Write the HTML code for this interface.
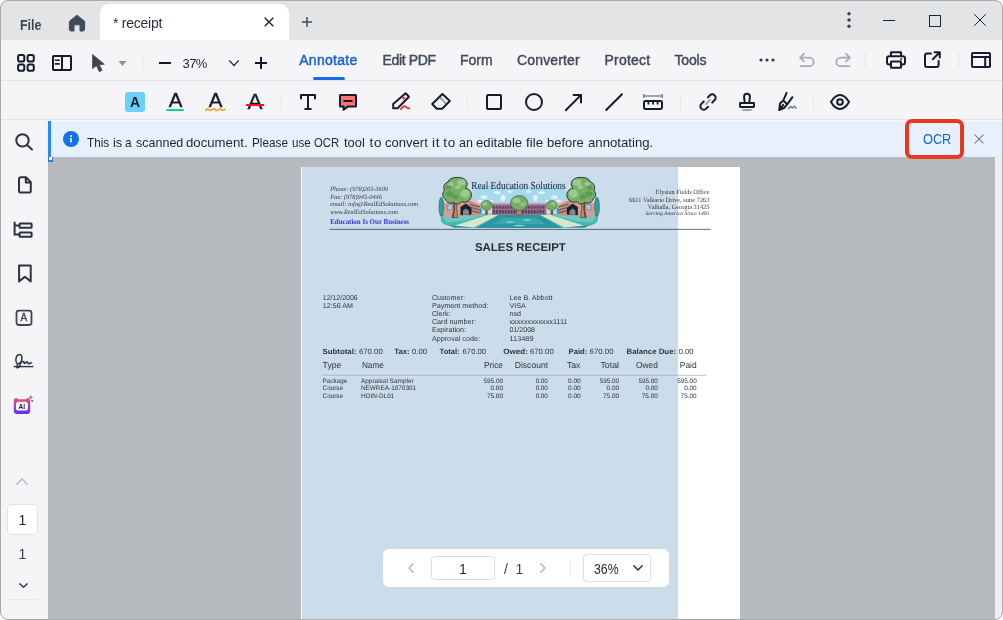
<!DOCTYPE html>
<html><head><meta charset="utf-8"><title>receipt</title>
<style>
*{box-sizing:border-box;margin:0;padding:0}
html,body{width:1003px;height:620px;overflow:hidden;background:#fff}
body{opacity:0.999;font-family:"Liberation Sans",sans-serif;color:#1a2233;position:relative}
div{position:absolute}
.t{white-space:nowrap;line-height:1}
svg{position:absolute;overflow:visible}
.ic{fill:none;stroke:#141c2e;stroke-width:2;stroke-linecap:round;stroke-linejoin:round}
#ntext span{position:absolute;top:0;white-space:pre;transform-origin:0 0}
.sep{width:1px;background:#e6e7ea}
.menu{font-size:14px;font-weight:normal;-webkit-text-stroke:0.45px;color:#434b5b;top:53px}
#frame{left:0;top:0;width:1003px;height:620px;border:1px solid #a9aaac;border-radius:8px;box-shadow:0 0 0 12px #fff;z-index:50}
</style></head><body>
<!-- backgrounds -->
<div id="title" style="left:0;top:0;width:1003px;height:40px;background:#e3e4e6"></div>
<div id="tb1" style="left:0;top:40px;width:1003px;height:40px;background:#f5f5f7"></div>
<div id="tbline" style="left:0;top:80px;width:1003px;height:1px;background:#e4e5e8"></div>
<div id="tb2" style="left:0;top:81px;width:1003px;height:38px;background:#f5f5f7"></div>
<div id="tbline2" style="left:0;top:119px;width:1003px;height:1px;background:#e5e5e7"></div>
<div id="tbgap" style="left:0;top:120px;width:1003px;height:1px;background:#f7f7f9"></div>
<div id="side" style="left:0;top:120px;width:48px;height:500px;background:#f5f5f7"></div>
<div id="doc" style="left:48px;top:121px;width:947px;height:499px;background:#b6b9be"></div>
<div id="rstrip" style="left:995px;top:157px;width:8px;height:463px;background:#eeeef0"></div>

<!-- title bar content -->
<div class="t" id="file" style="left:19.6px;top:18px;font-size:14px;font-weight:bold;transform:scaleX(0.89);transform-origin:0 0;color:#3d4555">File</div>
<svg id="home" style="left:68px;top:14px" width="18" height="18" viewBox="0 0 18 18"><path d="M9 1.2 L16.6 7.3 V15.3 Q16.6 17 14.9 17 H12 V10.8 H6 V17 H3.1 Q1.4 17 1.4 15.3 V7.3 Z" fill="#414a5c" stroke="#414a5c" stroke-width="1" stroke-linejoin="round"/></svg>
<div id="tab" style="left:100px;top:4px;width:189px;height:36px;background:#fff;border-radius:9px 9px 0 0"></div>
<div class="t" id="tabname" style="left:113px;top:16px;font-size:14px;letter-spacing:-0.25px;color:#2a3140">* receipt</div>
<svg id="tabx" style="left:264px;top:17px" width="10" height="10" viewBox="0 0 10 10"><path d="M0.7 0.7 L9.3 9.3 M9.3 0.7 L0.7 9.3" stroke="#1d2433" stroke-width="1.4" fill="none"/></svg>
<svg id="tabplus" style="left:302px;top:17px" width="10" height="10" viewBox="0 0 10 10"><path d="M5 0 V10 M0 5 H10" stroke="#444b5a" stroke-width="1.5" fill="none"/></svg>
<svg id="vdots" style="left:846px;top:12px" width="6" height="16" viewBox="0 0 6 16"><circle cx="3" cy="1.8" r="1.7" fill="#3c4352"/><circle cx="3" cy="8" r="1.7" fill="#3c4352"/><circle cx="3" cy="14.2" r="1.7" fill="#3c4352"/></svg>
<div id="wmin" style="left:883px;top:20px;width:12px;height:1px;background:#1d2433"></div>
<div id="wmax" style="left:929px;top:15px;width:12px;height:12px;border:1px solid #1d2433"></div>
<svg id="wclose" style="left:974px;top:14px" width="12" height="12" viewBox="0 0 12 12"><path d="M0.3 0.3 L11.7 11.7 M11.7 0.3 L0.3 11.7" stroke="#1d2433" stroke-width="1" fill="none"/></svg>


<!-- toolbar 1 -->
<svg id="i-grid" style="left:17px;top:54px" width="18" height="18" viewBox="0 0 18 18"><g class="ic" stroke-width="1.8"><rect x="1.1" y="1.1" width="6.2" height="6.4" rx="1.8"/><rect x="10.6" y="1.1" width="6.2" height="6.4" rx="1.8"/><rect x="1.1" y="10.5" width="6.2" height="6.2" rx="1.8"/><rect x="10.6" y="10.5" width="6.2" height="6.2" rx="1.8"/></g></svg>
<svg id="i-panel" style="left:52px;top:55px" width="20" height="16" viewBox="0 0 20 16"><g class="ic" stroke-linecap="butt"><rect x="1" y="1" width="18" height="14" rx="0.8"/><path d="M10 1 V15"/><path d="M3.4 5.3 H7.2 M3.4 8.9 H7.2" stroke-width="1.6"/></g></svg>
<svg id="i-cursor" style="left:92px;top:54px" width="13" height="18" viewBox="0 0 13 18"><path d="M0.6 0.6 L0.6 14.6 L4.4 11.6 L7.3 17.6 L10 16.4 L7.2 10.6 L12.3 10.3 Z" fill="#3c4454" stroke="#3c4454" stroke-width="0.8" stroke-linejoin="round"/></svg>
<svg id="i-dd" style="left:118px;top:61px" width="9" height="5" viewBox="0 0 9 5"><path d="M0.5 0 H8.5 L4.5 5 Z" fill="#8e939c"/></svg>
<div class="sep" style="left:142px;top:55px;height:16px"></div>
<div id="zminus" style="left:159px;top:62px;width:12px;height:2px;background:#10182b"></div>
<div class="t" id="zoomtxt" style="left:182.5px;top:57px;font-size:13px;letter-spacing:-0.6px;color:#1d2536">37%</div>
<svg id="zchev" style="left:229px;top:60px" width="10" height="7" viewBox="0 0 10 7"><path d="M0.7 0.9 L5 5.6 L9.3 0.9" fill="none" stroke="#3a4150" stroke-width="1.5" stroke-linecap="round" stroke-linejoin="round"/></svg>
<svg id="zplus" style="left:255px;top:57px" width="12" height="12" viewBox="0 0 12 12"><path d="M6 0 V12 M0 6 H12" stroke="#10182b" stroke-width="2" fill="none"/></svg>

<div class="t menu" id="m-annotate" style="left:299.2px;letter-spacing:0.3px;color:#1862cf">Annotate</div>
<div id="m-ul" style="left:313px;top:77px;width:32px;height:3px;border-radius:2px;background:#176bea"></div>
<div class="t menu" id="m-edit" style="left:382.5px;letter-spacing:-0.35px">Edit PDF</div>
<div class="t menu" id="m-form" style="left:460px">Form</div>
<div class="t menu" id="m-conv" style="left:517px;letter-spacing:0.15px">Converter</div>
<div class="t menu" id="m-prot" style="left:604.5px;letter-spacing:0.2px">Protect</div>
<div class="t menu" id="m-tools" style="left:674.5px;letter-spacing:-0.2px">Tools</div>

<svg id="i-more" style="left:759px;top:58px" width="16" height="4" viewBox="0 0 16 4"><circle cx="2" cy="2" r="1.6" fill="#2f3747"/><circle cx="8" cy="2" r="1.6" fill="#2f3747"/><circle cx="14" cy="2" r="1.6" fill="#2f3747"/></svg>
<svg id="i-undo" style="left:799px;top:53px" width="16" height="14" viewBox="0 0 16 14"><path d="M5 0.8 L1 4.6 L5 8.4 M1.2 4.6 H10.4 A4.3 4.3 0 0 1 10.4 13.2 H1.5" fill="none" stroke="#a8acb4" stroke-width="1.8" stroke-linecap="round" stroke-linejoin="round"/></svg>
<svg id="i-redo" style="left:835px;top:53px" width="16" height="14" viewBox="0 0 16 14"><path d="M11 0.8 L15 4.6 L11 8.4 M14.8 4.6 H5.6 A4.3 4.3 0 0 0 5.6 13.2 H14.5" fill="none" stroke="#a8acb4" stroke-width="1.8" stroke-linecap="round" stroke-linejoin="round"/></svg>
<div class="sep" style="left:865px;top:52px;height:16px"></div>
<svg id="i-print" style="left:886px;top:51px" width="20" height="18" viewBox="0 0 20 18"><g class="ic"><path d="M5 5 V1.2 H15 V5"/><path d="M5 13.4 H3.2 Q1 13.4 1 11.2 V7.4 Q1 5.2 3.2 5.2 H16.8 Q19 5.2 19 7.4 V11.2 Q19 13.4 16.8 13.4 H15"/><rect x="5" y="10.4" width="10" height="6.4" rx="0.5"/></g><circle cx="15.2" cy="8.3" r="1" fill="#141c2e"/></svg>
<svg id="i-ext" style="left:924px;top:51px" width="17" height="17" viewBox="0 0 17 17"><g class="ic"><path d="M7 2.4 H3 Q1 2.4 1 4.4 V14 Q1 16 3 16 H12.6 Q14.6 16 14.6 14 V10"/><path d="M10.6 1.2 H15.8 V6.4 M15.5 1.5 L8.8 8.2"/></g></svg>
<div class="sep" style="left:958px;top:52px;height:16px"></div>
<svg id="i-layout" style="left:971px;top:52px" width="20" height="16" viewBox="0 0 20 16"><g class="ic" stroke-linecap="butt"><rect x="1" y="1" width="18" height="14" rx="0.8"/><path d="M1 5 H19 M14.2 5 V15"/></g></svg>


<!-- toolbar 2 -->
<div id="hl" style="left:125px;top:92px;width:20px;height:20px;border-radius:3px;background:#6ecff6"></div>
<div class="t" id="hlA" style="left:130px;top:95px;font-size:14px;font-weight:bold;color:#141c2e">A</div>
<div class="t" id="ulA" style="left:168.8px;top:89.5px;font-size:20.5px;-webkit-text-stroke:0.4px;color:#141c2e">A</div>
<div id="ulbar" style="left:166px;top:109px;width:18px;height:2px;background:#0fd483;border-radius:1px"></div>
<div class="t" id="sqA" style="left:208.8px;top:89.5px;font-size:20.5px;-webkit-text-stroke:0.4px;color:#141c2e">A</div>
<svg id="sq" style="left:205px;top:107px" width="20" height="5" viewBox="0 0 20 5"><path d="M0.6 3.4 Q2.2 1 3.8 2.6 T7 2.6 T10.2 2.6 T13.4 2.6 T16.6 2.6 T19.6 2.2" fill="none" stroke="#ff9a14" stroke-width="1.5" stroke-linecap="round"/></svg>
<div class="t" id="stA" style="left:247.4px;top:91px;font-size:22.5px;-webkit-text-stroke:0.3px;color:#141c2e">A</div>
<div id="stbar" style="left:246px;top:104px;width:18px;height:2px;background:#f01414"></div>
<div class="sep" style="left:281px;top:94px;height:16px"></div>
<svg id="i-T" style="left:300px;top:94px" width="16" height="16" viewBox="0 0 16 16"><path class="ic" stroke-linecap="butt" stroke-linejoin="miter" d="M1 4.6 V1 H15 V4.6 M8 1 V15 M5.2 15 H10.8"/></svg>
<svg id="i-comment" style="left:339px;top:94px" width="18" height="17" viewBox="0 0 18 17"><path d="M1.5 1 H16.5 Q17 1 17 1.5 V12.1 Q17 12.6 16.5 12.6 H8.8 L4.6 15.8 V12.6 H1.5 Q1 12.6 1 12.1 V1.5 Q1 1 1.5 1 Z" fill="#ff7272" stroke="#141c2e" stroke-width="2" stroke-linejoin="round"/><path d="M4.4 7 H13.6" stroke="#141c2e" stroke-width="2" fill="none"/></svg>
<svg id="i-pencil" style="left:392px;top:92px" width="18" height="19" viewBox="0 0 18 19"><path class="ic" stroke-width="1.9" d="M13.6 1.3 L17 4.7 L5.6 16.3 H1.2 V12 Z"/><path d="M10.4 5 L12.6 7.2" stroke="#ff2020" stroke-width="2" fill="none"/><path d="M8.8 17.2 C10.2 15.8 11.4 13.4 13 14.2 C14.4 15 15 16.8 17.2 16.2" fill="none" stroke="#ff2020" stroke-width="1.8" stroke-linecap="round"/></svg>
<svg id="i-eraser" style="left:431px;top:92px" width="20" height="18" viewBox="0 0 20 18"><path d="M9 5.2 L15 11.8" stroke="#9a9ea7" stroke-width="1.8" fill="none"/><path class="ic" stroke-width="1.9" d="M11.4 2 L18.8 9 L11.2 16.8 H5.8 L1.2 12 Z"/></svg>
<div class="sep" style="left:467px;top:94px;height:16px"></div>
<div id="i-rect" style="left:486px;top:94px;width:16px;height:16px;border:2px solid #141c2e;border-radius:2px"></div>
<div id="i-circ" style="left:525px;top:93px;width:18px;height:18px;border:2px solid #141c2e;border-radius:50%"></div>
<svg id="i-arrow" style="left:565px;top:94px" width="17" height="17" viewBox="0 0 17 17"><path class="ic" stroke-linejoin="miter" stroke-linecap="butt" d="M0.8 16.2 L15.6 1.4 M8.6 1 H16 V8.4"/></svg>
<svg id="i-line" style="left:605px;top:93px" width="18" height="18" viewBox="0 0 18 18"><path class="ic" stroke-linecap="butt" d="M1.2 17 L17 1.2"/></svg>
<svg id="i-ruler" style="left:643px;top:94px" width="20" height="16" viewBox="0 0 20 16"><path d="M0.8 0 V4 M19.2 0 V4 M0.8 2 H19.2" stroke="#858a95" stroke-width="1.7" fill="none"/><rect class="ic" x="1" y="7" width="18" height="8" rx="1.4"/><path d="M5.4 7 V10.4 M10 7 V10.4 M14.6 7 V10.4" stroke="#141c2e" stroke-width="1.8" fill="none"/></svg>
<div class="sep" style="left:680px;top:94px;height:16px"></div>
<svg id="i-link" style="left:699px;top:93px" width="18" height="18" viewBox="0 0 18 18"><g transform="translate(9 9) rotate(-45)"><path class="ic" d="M3.4 -3.4 H6 A3.4 3.4 0 0 1 6 3.4 H2.6"/><path class="ic" d="M-2.6 -3.4 H-6 A3.4 3.4 0 0 0 -6 3.4 H-3.4"/><path d="M-3.6 0 H3.6" stroke="#9a9ea7" stroke-width="1.8" fill="none"/></g></svg>
<svg id="i-stamp" style="left:739px;top:92px" width="16" height="19" viewBox="0 0 16 19"><path class="ic" stroke-width="1.8" d="M5.7 11 C5.7 8.4 5.1 6.8 5.1 4.6 A2.9 2.9 0 0 1 10.9 4.6 C10.9 6.8 10.3 8.4 10.3 11"/><rect class="ic" stroke-width="1.8" x="1" y="11" width="14" height="4" rx="0.4"/><path d="M3.4 18 H12.6" stroke="#8b909a" stroke-width="1.6" fill="none"/></svg>
<svg id="i-pen" style="left:778px;top:92px" width="19" height="19" viewBox="0 0 19 19"><path class="ic" stroke-width="1.6" d="M8.6 0.8 L5.2 8.6 M14.4 5.2 L9.4 12.2 M5.2 8.6 L9.4 12.2 L6 16 L1.2 18 L2 11.4 Z M1.4 17.8 L5.2 12.8"/><path d="M10.8 16.6 Q12.4 13.6 13.6 15.2 T15.6 15 T18 16.2" fill="none" stroke="#7d828c" stroke-width="1.6" stroke-linecap="round"/></svg>
<div class="sep" style="left:813px;top:94px;height:16px"></div>
<svg id="i-eye" style="left:830px;top:94px" width="20" height="16" viewBox="0 0 20 16"><path class="ic" d="M1 8 Q5 1 10 1 T19 8 Q15 15 10 15 T1 8 Z"/><circle class="ic" cx="10" cy="8" r="2.8"/></svg>


<!-- sidebar -->
<svg id="s-search" style="left:14px;top:131px" width="20" height="20" viewBox="0 0 20 20"><circle cx="8.5" cy="9.4" r="6.2" fill="none" stroke="#2b3242" stroke-width="2"/><path d="M13.2 14 L18 18.5" stroke="#2b3242" stroke-width="2" stroke-linecap="round"/></svg>
<svg id="s-page" style="left:18px;top:176px" width="14" height="18" viewBox="0 0 14 18"><path d="M2.4 1.3 H8 L12.8 6.1 V15 Q12.8 16.5 11.3 16.5 H2.5 Q1 16.5 1 15 V2.8 Q1 1.3 2.4 1.3 Z M7.8 1.6 V6.4 H12.5" fill="none" stroke="#2b3242" stroke-width="2" stroke-linejoin="round"/></svg>
<svg id="s-tree" style="left:13px;top:221px" width="20" height="18" viewBox="0 0 20 18"><path d="M1.6 0.8 V13.4 H6 M1.6 4.6 H6" fill="none" stroke="#2b3242" stroke-width="2"/><rect x="6.6" y="2.4" width="12" height="4.4" rx="0.6" fill="none" stroke="#2b3242" stroke-width="2"/><rect x="6.6" y="11.4" width="12" height="4.4" rx="0.6" fill="none" stroke="#2b3242" stroke-width="2"/></svg>
<svg id="s-bookmark" style="left:18px;top:264px" width="14" height="19" viewBox="0 0 14 19"><path d="M1.1 1.4 H12.7 V17.4 L6.9 12.8 L1.1 17.4 Z" fill="none" stroke="#2b3242" stroke-width="2" stroke-linejoin="round"/></svg>
<svg id="s-abox" style="left:15px;top:309px" width="18" height="18" viewBox="0 0 18 18"><rect x="1.5" y="1.6" width="15" height="14.4" rx="2.4" fill="none" stroke="#3d4453" stroke-width="1.8"/></svg>
<div class="t" id="s-aboxA" style="left:20.6px;top:313px;font-size:10px;-webkit-text-stroke:0.35px;color:#3d4453">A</div>
<svg id="s-sign" style="left:13px;top:353px" width="21" height="18" viewBox="0 0 21 18"><path d="M3.6 10.2 C1.6 6 3.6 1.4 6.8 1.4 C10.2 1.4 9 8 6.8 12.6 C5.6 15 3.8 15.6 3.8 13.6 C4 11.6 7 9.4 10.4 8.6 C11.6 8.4 10.6 10.6 11.6 10.6 C12.6 10.6 13.2 8.8 14.2 8.8 C15.2 8.8 14.6 10.8 15.6 10.8 C16.6 10.8 17.4 9.8 18.6 9.8" fill="none" stroke="#2b3242" stroke-width="1.5" stroke-linecap="round"/><path d="M0.6 13.6 H20.4" stroke="#2b3242" stroke-width="1.4"/></svg>
<svg id="s-ai" style="left:13px;top:395px" width="22" height="22" viewBox="0 0 22 22"><defs><linearGradient id="aig" x1="0" y1="0" x2="0" y2="1"><stop offset="0" stop-color="#ee5252"/><stop offset="0.5" stop-color="#a040d8"/><stop offset="1" stop-color="#5a2ef2"/></linearGradient></defs><path d="M0.8 7 Q0.8 3 3 3 Q4.4 3 4.8 4.2 H13.2 Q13.6 3 15 3 Q17.2 3 17.2 7 V15.6 Q17.2 19 14 19 H4 Q0.8 19 0.8 15.6 Z" fill="url(#aig)"/><rect x="3" y="6.8" width="11.8" height="8.8" rx="2.6" fill="#fff"/><text x="8.9" y="13.6" font-family="Liberation Sans, sans-serif" font-weight="bold" font-size="6.6" fill="#1c1450" text-anchor="middle">AI</text><path d="M17.8 -0.2 L18.5 1.6 L20.3 2.3 L18.5 3 L17.8 4.8 L17.1 3 L15.3 2.3 L17.1 1.6 Z" fill="#c455c4"/><rect x="18.2" y="4.9" width="1.9" height="1.9" rx="0.4" fill="#7a4af0"/></svg>
<svg id="s-up" style="left:16px;top:478px" width="12" height="7" viewBox="0 0 12 7"><path d="M0.8 6.2 L6 1 L11.2 6.2" fill="none" stroke="#b5b8bf" stroke-width="1.5" stroke-linecap="round" stroke-linejoin="round"/></svg>
<div id="s-pgbox" style="left:7px;top:504px;width:31px;height:31px;background:#fff;border:1px solid #e2e3e7;border-radius:4px"></div>
<div class="t" id="s-pg1" style="left:18.5px;top:512.5px;font-size:14px;color:#1d2536">1</div>
<div class="t" id="s-pg2" style="left:18.5px;top:546.5px;font-size:14px;color:#3a4150">1</div>
<svg id="s-down" style="left:18.6px;top:583px" width="9" height="5" viewBox="0 0 9 5"><path d="M0.9 0.9 L4.5 4.3 L8.1 0.9" fill="none" stroke="#3a4150" stroke-width="1.5" stroke-linecap="round" stroke-linejoin="round"/></svg>
<div id="s-line" style="left:6px;top:599px;width:32px;height:1px;background:#e9eaed"></div>

<!-- notification bar -->
<div id="nbar" style="left:48px;top:121px;width:955px;height:36px;background:#e6f1fd"></div>
<div id="nblue" style="left:48px;top:121px;width:3px;height:36px;background:#2b88fb"></div>
<div id="ncorner" style="left:48px;top:157px;width:5px;height:5px;background:#3a78e0"></div>
<div id="ncorner2" style="left:49px;top:157px;width:3px;height:3px;background:#fff"></div>
<svg id="ninfo" style="left:63px;top:131px" width="16" height="16" viewBox="0 0 16 16"><circle cx="8" cy="8" r="8" fill="#1473e6"/><rect x="7.2" y="7" width="1.6" height="4.4" rx="0.4" fill="#fff"/><circle cx="8" cy="5" r="1" fill="#fff"/></svg>
<div class="t" id="ntext" style="left:87px;top:135.5px;width:580px;height:14px;font-size:13.5px;color:#1d2536"><span style="left:0.1px;transform:scaleX(0.870)">This </span><span style="left:25.9px;transform:scaleX(0.944)">is </span><span style="left:38.4px;transform:scaleX(0.878)">a </span><span style="left:48.5px;transform:scaleX(0.927)">scanned </span><span style="left:99.2px;transform:scaleX(0.977)">document. </span><span style="left:165.2px;transform:scaleX(0.870)">Please </span><span style="left:204.7px;transform:scaleX(0.863)">use </span><span style="left:227.4px;transform:scaleX(0.837)">OCR </span><span style="left:256.5px;transform:scaleX(0.960)">tool </span><span style="left:282.4px;letter-spacing:0.93px">to </span><span style="left:298.3px;transform:scaleX(0.967)">convert </span><span style="left:345.0px;letter-spacing:0.65px">it </span><span style="left:356.3px;letter-spacing:0.73px">to </span><span style="left:371.8px;transform:scaleX(0.925)">an </span><span style="left:389.0px;transform:scaleX(0.977)">editable </span><span style="left:438.9px;transform:scaleX(0.990)">file </span><span style="left:460.0px;transform:scaleX(0.961)">before </span><span style="left:500.7px;transform:scaleX(0.976)">annotating. </span></div>
<div class="t" id="nocr" style="left:923px;top:132px;font-size:14px;transform:scaleX(0.91);transform-origin:0 0;color:#1763c4">OCR</div>
<svg id="nx" style="left:974px;top:134px" width="10" height="10" viewBox="0 0 10 10"><path d="M0.6 0.6 L9.4 9.4 M9.4 0.6 L0.6 9.4" stroke="#7d828c" stroke-width="1.2" fill="none"/></svg>
<div id="redbox" style="left:905px;top:119px;width:59px;height:40px;border:4px solid #e8391f;border-radius:7px"></div>


<!-- page -->
<div id="page" style="left:301px;top:167px;width:439px;height:453px;background:#fff"></div>
<div id="pblue" style="left:302px;top:167px;width:375.5px;height:453px;background:#cbdcea"></div>
<!--RECEIPT_START-->
<svg id="receipt" style="left:0;top:0;text-rendering:geometricPrecision" width="1003" height="620" viewBox="0 0 1003 620">
<filter id="lb" x="-5%" y="-5%" width="110%" height="110%"><feGaussianBlur stdDeviation="0.45"/></filter>
<g filter="url(#lb)">
<path d="M470 205 C466 198 470 189 478 188.6 C484 182.6 496 185.6 500 188 C508 184 516 188 519.2 187 C523 188 531 184 538.4 188 C542 185.6 554 182.6 560.4 188.6 C568 189 572 198 568.4 205 Z" fill="#a7d8ee"/>
<ellipse cx="484" cy="197" rx="3.4" ry="1.8" fill="#e3f1f8"/><ellipse cx="554.4" cy="197" rx="3.4" ry="1.8" fill="#e3f1f8"/>
<ellipse cx="480" cy="201" rx="2.8" ry="1.4" fill="#e3f1f8"/><ellipse cx="558.4" cy="201" rx="2.8" ry="1.4" fill="#e3f1f8"/>
<ellipse cx="497" cy="192.6" rx="3.6" ry="1.7" fill="#e3f1f8"/><ellipse cx="541.4" cy="192.6" rx="3.6" ry="1.7" fill="#e3f1f8"/>
<ellipse cx="503" cy="198" rx="2.3" ry="3.2" fill="#e3f1f8"/><ellipse cx="535.4" cy="198" rx="2.3" ry="3.2" fill="#e3f1f8"/>
<ellipse cx="510" cy="191.6" rx="2.8" ry="1.4" fill="#e3f1f8"/><ellipse cx="528.4" cy="191.6" rx="2.8" ry="1.4" fill="#e3f1f8"/>
<ellipse cx="491" cy="201" rx="2" ry="1.2" fill="#e3f1f8"/><ellipse cx="547.4" cy="201" rx="2" ry="1.2" fill="#e3f1f8"/>
<path d="M441 216 C441 213.5 446 213.5 452 213.8 H586 C592 213.5 597.6 213.5 597.6 216 C599 221 596 224.5 590 225.5 C575 228.5 560 228 540 228 H498 C478 228 463 228.5 448 225.5 C442 224.5 440 221 441 216 Z" fill="#49b7b1"/>
<polygon points="442,216 470,214.5 488,214.5 462,221 446,222.5" fill="#6cc9bd"/><polygon points="596.4,216 568.4,214.5 550.4,214.5 576.4,221 592.4,222.5" fill="#6cc9bd"/>
<polygon points="489,214.6 499,214.6 474,227.4 452,226.4" fill="#d5e8cf"/><polygon points="549.4,214.6 539.4,214.6 564.4,227.4 586.4,226.4" fill="#d5e8cf"/>
<polygon points="448,225 474,227.4 454,227.8" fill="#2f8f95"/><polygon points="590.4,225 564.4,227.4 584.4,227.8" fill="#2f8f95"/>
<polygon points="499,215 539.4,215 562,228 476.4,228" fill="#2b95a3"/>
<polygon points="503,218 535,218 546,224 492,224" fill="#3aa7b0"/>
<ellipse cx="510" cy="222" rx="4" ry="0.8" fill="#8fd6d2"/>
<ellipse cx="527" cy="220" rx="3.5" ry="0.7" fill="#8fd6d2"/>
<ellipse cx="519" cy="225.5" rx="6" ry="0.8" fill="#8fd6d2"/>
<polygon points="444,201 468,197.5 480.5,203.5 480.5,215 444,217" fill="#d39c94"/><polygon points="594.4,201 570.4,197.5 557.9,203.5 557.9,215 594.4,217" fill="#d39c94"/>
<polygon points="444,201 468,197.5 480.5,203.5 480.5,205.5 468,199.8 444,203.2" fill="#e8c4bc"/><polygon points="594.4,201 570.4,197.5 557.9,203.5 557.9,205.5 570.4,199.8 594.4,203.2" fill="#e8c4bc"/>
<polygon points="468,199.8 480.5,205.5 480.5,215 468,216" fill="#c88e86"/><polygon points="570.4,199.8 557.9,205.5 557.9,215 570.4,216" fill="#c88e86"/>
<polygon points="470,203.8 479.5,206.2 479.5,207.4 470,205" fill="#6a5a68"/><polygon points="568.4,203.8 558.9,206.2 558.9,207.4 568.4,205" fill="#6a5a68"/>
<polygon points="470,206.8 479.5,209.2 479.5,210.4 470,208" fill="#6a5a68"/><polygon points="568.4,206.8 558.9,209.2 558.9,210.4 568.4,208" fill="#6a5a68"/>
<polygon points="470,209.8 479.5,212.2 479.5,213.4 470,211" fill="#6a5a68"/><polygon points="568.4,209.8 558.9,212.2 558.9,213.4 568.4,211" fill="#6a5a68"/>
<polygon points="460.5,207 466,203.5 471.5,208 471.5,214.6 460.5,215.2" fill="#1d222c"/><polygon points="577.9,207 572.4,203.5 566.9,208 566.9,214.6 577.9,215.2" fill="#1d222c"/>
<polygon points="463,210.5 466,208.5 469,211 469,214.6 463,215" fill="#7a8a98"/><polygon points="575.4,210.5 572.4,208.5 569.4,211 569.4,214.6 575.4,215" fill="#7a8a98"/>
<polygon points="447.6,205 452.4,204.6 452.4,209.6 447.6,210" fill="#a3d4e4" stroke="#3a4a5a" stroke-width="0.4" stroke-linejoin="round"/><polygon points="590.8,205 586.0,204.6 586.0,209.6 590.8,210" fill="#a3d4e4" stroke="#3a4a5a" stroke-width="0.4" stroke-linejoin="round"/>
<rect x="492" y="204" width="54.4" height="10.8" fill="#a8687a"/>
<rect x="492" y="203.4" width="54.4" height="1.2" fill="#d08a90"/>
<rect x="493.2" y="206" width="1.7" height="2.6" fill="#3d4c80"/>
<rect x="493.2" y="210.2" width="1.7" height="3.2" fill="#35406c"/>
<rect x="496.1" y="206" width="1.7" height="2.6" fill="#3d4c80"/>
<rect x="496.1" y="210.2" width="1.7" height="3.2" fill="#35406c"/>
<rect x="499.0" y="206" width="1.7" height="2.6" fill="#3d4c80"/>
<rect x="499.0" y="210.2" width="1.7" height="3.2" fill="#35406c"/>
<rect x="501.9" y="206" width="1.7" height="2.6" fill="#3d4c80"/>
<rect x="501.9" y="210.2" width="1.7" height="3.2" fill="#35406c"/>
<rect x="504.8" y="206" width="1.7" height="2.6" fill="#3d4c80"/>
<rect x="504.8" y="210.2" width="1.7" height="3.2" fill="#35406c"/>
<rect x="507.7" y="206" width="1.7" height="2.6" fill="#3d4c80"/>
<rect x="507.7" y="210.2" width="1.7" height="3.2" fill="#35406c"/>
<rect x="510.6" y="206" width="1.7" height="2.6" fill="#3d4c80"/>
<rect x="510.6" y="210.2" width="1.7" height="3.2" fill="#35406c"/>
<rect x="513.5" y="206" width="1.7" height="2.6" fill="#3d4c80"/>
<rect x="513.5" y="210.2" width="1.7" height="3.2" fill="#35406c"/>
<rect x="516.4" y="206" width="1.7" height="2.6" fill="#3d4c80"/>
<rect x="516.4" y="210.2" width="1.7" height="3.2" fill="#35406c"/>
<rect x="519.3" y="206" width="1.7" height="2.6" fill="#3d4c80"/>
<rect x="519.3" y="210.2" width="1.7" height="3.2" fill="#35406c"/>
<rect x="522.2" y="206" width="1.7" height="2.6" fill="#3d4c80"/>
<rect x="522.2" y="210.2" width="1.7" height="3.2" fill="#35406c"/>
<rect x="525.1" y="206" width="1.7" height="2.6" fill="#3d4c80"/>
<rect x="525.1" y="210.2" width="1.7" height="3.2" fill="#35406c"/>
<rect x="528.0" y="206" width="1.7" height="2.6" fill="#3d4c80"/>
<rect x="528.0" y="210.2" width="1.7" height="3.2" fill="#35406c"/>
<rect x="530.9" y="206" width="1.7" height="2.6" fill="#3d4c80"/>
<rect x="530.9" y="210.2" width="1.7" height="3.2" fill="#35406c"/>
<rect x="533.8" y="206" width="1.7" height="2.6" fill="#3d4c80"/>
<rect x="533.8" y="210.2" width="1.7" height="3.2" fill="#35406c"/>
<rect x="536.7" y="206" width="1.7" height="2.6" fill="#3d4c80"/>
<rect x="536.7" y="210.2" width="1.7" height="3.2" fill="#35406c"/>
<rect x="539.6" y="206" width="1.7" height="2.6" fill="#3d4c80"/>
<rect x="539.6" y="210.2" width="1.7" height="3.2" fill="#35406c"/>
<rect x="542.5" y="206" width="1.7" height="2.6" fill="#3d4c80"/>
<rect x="542.5" y="210.2" width="1.7" height="3.2" fill="#35406c"/>
<ellipse cx="441.4" cy="206.8" rx="2.4" ry="9.6" fill="#2f9f98" stroke="#1c4a4a" stroke-width="0.5"/><ellipse cx="597.0" cy="206.8" rx="2.4" ry="9.6" fill="#2f9f98" stroke="#1c4a4a" stroke-width="0.5"/>
<polygon points="485.6,209 487.6,209 487.8,214.6 485.2,214.6" fill="#7a4a52"/><polygon points="552.8,209 550.8,209 550.6,214.6 553.2,214.6" fill="#7a4a52"/>
<ellipse cx="486.6" cy="205.4" rx="5.6" ry="5" fill="#6fab68" stroke="#3c6a44" stroke-width="0.5"/><ellipse cx="551.8" cy="205.4" rx="5.6" ry="5" fill="#6fab68" stroke="#3c6a44" stroke-width="0.5"/>
<ellipse cx="485" cy="204" rx="2.6" ry="2" fill="#93c886"/><ellipse cx="553.4" cy="204" rx="2.6" ry="2" fill="#93c886"/>
<ellipse cx="480.6" cy="211" rx="1.2" ry="3" fill="#2f9f98"/><ellipse cx="557.8" cy="211" rx="1.2" ry="3" fill="#2f9f98"/>
<polygon points="517,207 521.4,207 521.8,214.8 516.4,214.8" fill="#c0845e" stroke="#4a3428" stroke-width="0.4"/>
<ellipse cx="519.2" cy="203" rx="8.7" ry="7.5" fill="#76ad69" stroke="#35583a" stroke-width="0.6"/>
<ellipse cx="516.5" cy="200.5" rx="4" ry="2.6" fill="#98ca88"/>
<ellipse cx="523" cy="204" rx="3" ry="2" fill="#8cc07c"/>
<polygon points="453.4,199 457.2,199 456.6,208 457.8,217.6 452.2,217.6 454,209" fill="#c58a64" stroke="#3a2a22" stroke-width="0.6" stroke-linejoin="round"/><polygon points="585.0,199 581.2,199 581.8,208 580.6,217.6 586.2,217.6 584.4,209" fill="#c58a64" stroke="#3a2a22" stroke-width="0.6" stroke-linejoin="round"/>
<polygon points="453.4,199 454.6,199 455,209 453.6,217.6 452.2,217.6 454,209" fill="#5a3a2c"/><polygon points="585.0,199 583.8,199 583.4,209 584.8,217.6 586.2,217.6 584.4,209" fill="#5a3a2c"/>
<path d="M456 177.6 C462 176.6 467.6 179.6 467.2 184.6 C466.8 186.6 466 187.6 465.4 188.2 C470 189 472.6 193 471 197.4 C469.6 201.6 465 203.2 461.4 201.6 C459.6 204.4 455.4 204.6 453.6 202.4 C450.6 204.2 446 202.6 445.4 199 C442.4 197.6 441.8 193 444.4 190.6 C442.8 187 444.4 183 448 182 C449 179 452.4 177.4 456 177.6 Z" fill="#78af6b" stroke="#1f2b1f" stroke-width="0.9" stroke-linejoin="round"/>
<path d="M456 177.6 C462 176.6 467.6 179.6 467.2 184.6 C466.8 186.6 466 187.6 465.4 188.2 C470 189 472.6 193 471 197.4 C469.6 201.6 465 203.2 461.4 201.6 C459.6 204.4 455.4 204.6 453.6 202.4 C450.6 204.2 446 202.6 445.4 199 C442.4 197.6 441.8 193 444.4 190.6 C442.8 187 444.4 183 448 182 C449 179 452.4 177.4 456 177.6 Z" transform="translate(1038.4 0) scale(-1 1)" fill="#78af6b" stroke="#1f2b1f" stroke-width="0.9" stroke-linejoin="round"/>
<ellipse cx="461.5" cy="182.4" rx="4.2" ry="3.2" fill="#9acb88"/><ellipse cx="576.9" cy="182.4" rx="4.2" ry="3.2" fill="#9acb88"/>
<ellipse cx="465" cy="193.6" rx="4.6" ry="4" fill="#9acb88"/><ellipse cx="573.4" cy="193.6" rx="4.6" ry="4" fill="#9acb88"/>
<ellipse cx="458" cy="187" rx="3" ry="2" fill="#9acb88"/><ellipse cx="580.4" cy="187" rx="3" ry="2" fill="#9acb88"/>
<ellipse cx="451" cy="184" rx="3" ry="2" fill="#9acb88"/><ellipse cx="587.4" cy="184" rx="3" ry="2" fill="#9acb88"/>
<ellipse cx="449.6" cy="194" rx="3.6" ry="3" fill="#5f9a5c"/><ellipse cx="588.8" cy="194" rx="3.6" ry="3" fill="#5f9a5c"/>
<ellipse cx="455.5" cy="197" rx="3" ry="2.4" fill="#5f9a5c"/><ellipse cx="582.9" cy="197" rx="3" ry="2.4" fill="#5f9a5c"/>
<ellipse cx="448.6" cy="187.6" rx="2.6" ry="2.4" fill="#5f9a5c"/><ellipse cx="589.8" cy="187.6" rx="2.6" ry="2.4" fill="#5f9a5c"/>
</g>
<text x="471.3" y="188.9" font-family='"Liberation Serif", serif' font-size="10.8" fill="#1c2d48" stroke="#1c2d48" stroke-width="0.08" textLength="94.3" lengthAdjust="spacingAndGlyphs">Real Education Solutions</text>
<path d="M329.5 229.4 H710.6" stroke="#3c4652" stroke-width="0.8"/><path d="M322 375.3 H706.8" stroke="#97a2ae" stroke-width="0.6"/>
<text x="330.2" y="190.9" font-size="6.4" font-family='"Liberation Serif", serif' fill="#23272e" fill-opacity="0.92" font-style="italic" textLength="57.8" lengthAdjust="spacingAndGlyphs">Phone: (978)263-3600</text>
<text x="330.2" y="198.7" font-size="6.4" font-family='"Liberation Serif", serif' fill="#23272e" fill-opacity="0.92" font-style="italic" textLength="51.8" lengthAdjust="spacingAndGlyphs">Fax: (978)945-0446</text>
<text x="330.2" y="206.3" font-size="6.4" font-family='"Liberation Serif", serif' fill="#23272e" fill-opacity="0.92" font-style="italic" textLength="87.8" lengthAdjust="spacingAndGlyphs">email: info@RealEdSolutions.com</text>
<text x="330.2" y="213.9" font-size="6.4" font-family='"Liberation Serif", serif' fill="#23272e" fill-opacity="0.92" font-style="italic" textLength="67.8" lengthAdjust="spacingAndGlyphs">www.RealEdSolutions.com</text>
<text x="330.2" y="223.8" font-size="7.5" font-family='"Liberation Serif", serif' fill="#2a2ad0" fill-opacity="0.92" font-weight="bold" textLength="78.9" lengthAdjust="spacingAndGlyphs">Education Is Our Business</text>
<text x="655.6" y="193.9" font-size="6.4" font-family='"Liberation Serif", serif' fill="#23272e" fill-opacity="0.92" textLength="53.8" lengthAdjust="spacingAndGlyphs">Elysian Fields Office</text>
<text x="629" y="201.6" font-size="6.4" font-family='"Liberation Serif", serif' fill="#23272e" fill-opacity="0.92" textLength="80.4" lengthAdjust="spacingAndGlyphs">6611 Valkarie Drive, suite 7263</text>
<text x="647.8" y="209.1" font-size="6.4" font-family='"Liberation Serif", serif' fill="#23272e" fill-opacity="0.92" textLength="61.6" lengthAdjust="spacingAndGlyphs">Valhalla, Georgia 31425</text>
<text x="645.5" y="215.4" font-size="5.4" font-family='"Liberation Serif", serif' fill="#23272e" fill-opacity="0.92" font-style="italic" textLength="63.9" lengthAdjust="spacingAndGlyphs">Serving America Since 1493</text>
<text x="475" y="250.7" font-size="11.45" font-family='"Liberation Sans", sans-serif' fill="#23272e" fill-opacity="0.97" font-weight="bold" textLength="90.8" lengthAdjust="spacingAndGlyphs">SALES RECEIPT</text>
<text x="322.8" y="299.7" font-size="7.1" font-family='"Liberation Sans", sans-serif' fill="#23272e" fill-opacity="0.92" textLength="34.9" lengthAdjust="spacingAndGlyphs">12/12/2006</text>
<text x="322.8" y="307.8" font-size="7.1" font-family='"Liberation Sans", sans-serif' fill="#23272e" fill-opacity="0.92" textLength="30.2" lengthAdjust="spacingAndGlyphs">12:56 AM</text>
<text x="431.9" y="299.7" font-size="7.1" font-family='"Liberation Sans", sans-serif' fill="#23272e" fill-opacity="0.92" textLength="33.0" lengthAdjust="spacingAndGlyphs">Customer:</text>
<text x="509.5" y="299.7" font-size="7.1" font-family='"Liberation Sans", sans-serif' fill="#23272e" fill-opacity="0.92" textLength="43.1" lengthAdjust="spacingAndGlyphs">Lee B. Abbott</text>
<text x="431.9" y="307.8" font-size="7.1" font-family='"Liberation Sans", sans-serif' fill="#23272e" fill-opacity="0.92" textLength="56.4" lengthAdjust="spacingAndGlyphs">Payment method:</text>
<text x="509.5" y="307.8" font-size="7.1" font-family='"Liberation Sans", sans-serif' fill="#23272e" fill-opacity="0.92" textLength="16.3" lengthAdjust="spacingAndGlyphs">VISA</text>
<text x="431.9" y="316.1" font-size="7.1" font-family='"Liberation Sans", sans-serif' fill="#23272e" fill-opacity="0.92" textLength="18.6" lengthAdjust="spacingAndGlyphs">Clerk:</text>
<text x="509.5" y="316.1" font-size="7.1" font-family='"Liberation Sans", sans-serif' fill="#23272e" fill-opacity="0.92" textLength="11.5" lengthAdjust="spacingAndGlyphs">nsd</text>
<text x="431.9" y="324.2" font-size="7.1" font-family='"Liberation Sans", sans-serif' fill="#23272e" fill-opacity="0.92" textLength="44.1" lengthAdjust="spacingAndGlyphs">Card number:</text>
<text x="509.5" y="324.2" font-size="7.1" font-family='"Liberation Sans", sans-serif' fill="#23272e" fill-opacity="0.92" textLength="57.9" lengthAdjust="spacingAndGlyphs">xxxxxxxxxxxx1111</text>
<text x="431.9" y="332.4" font-size="7.1" font-family='"Liberation Sans", sans-serif' fill="#23272e" fill-opacity="0.92" textLength="34.2" lengthAdjust="spacingAndGlyphs">Expiration:</text>
<text x="509.5" y="332.4" font-size="7.1" font-family='"Liberation Sans", sans-serif' fill="#23272e" fill-opacity="0.92" textLength="25.5" lengthAdjust="spacingAndGlyphs">01/2008</text>
<text x="431.9" y="340.8" font-size="7.1" font-family='"Liberation Sans", sans-serif' fill="#23272e" fill-opacity="0.92" textLength="48.1" lengthAdjust="spacingAndGlyphs">Approval code:</text>
<text x="509.5" y="340.8" font-size="7.1" font-family='"Liberation Sans", sans-serif' fill="#23272e" fill-opacity="0.92" textLength="24.0" lengthAdjust="spacingAndGlyphs">113489</text>
<text x="322.6" y="354" font-size="7.7" font-family='"Liberation Sans", sans-serif' fill="#23272e" fill-opacity="0.92" font-weight="bold" textLength="33.9" lengthAdjust="spacingAndGlyphs">Subtotal:</text>
<text x="358.9" y="354" font-size="7.7" font-family='"Liberation Sans", sans-serif' fill="#23272e" fill-opacity="0.92" textLength="23.9" lengthAdjust="spacingAndGlyphs">670.00</text>
<text x="394.2" y="354" font-size="7.7" font-family='"Liberation Sans", sans-serif' fill="#23272e" fill-opacity="0.92" font-weight="bold" textLength="15.5" lengthAdjust="spacingAndGlyphs">Tax:</text>
<text x="412.1" y="354" font-size="7.7" font-family='"Liberation Sans", sans-serif' fill="#23272e" fill-opacity="0.92" textLength="15.0" lengthAdjust="spacingAndGlyphs">0.00</text>
<text x="439.6" y="354" font-size="7.7" font-family='"Liberation Sans", sans-serif' fill="#23272e" fill-opacity="0.92" font-weight="bold" textLength="20.0" lengthAdjust="spacingAndGlyphs">Total:</text>
<text x="462.6" y="354" font-size="7.7" font-family='"Liberation Sans", sans-serif' fill="#23272e" fill-opacity="0.92" textLength="23.5" lengthAdjust="spacingAndGlyphs">670.00</text>
<text x="503.3" y="354" font-size="7.7" font-family='"Liberation Sans", sans-serif' fill="#23272e" fill-opacity="0.92" font-weight="bold" textLength="24.6" lengthAdjust="spacingAndGlyphs">Owed:</text>
<text x="530" y="354" font-size="7.7" font-family='"Liberation Sans", sans-serif' fill="#23272e" fill-opacity="0.92" textLength="23.7" lengthAdjust="spacingAndGlyphs">670.00</text>
<text x="568.6" y="354" font-size="7.7" font-family='"Liberation Sans", sans-serif' fill="#23272e" fill-opacity="0.92" font-weight="bold" textLength="18.7" lengthAdjust="spacingAndGlyphs">Paid:</text>
<text x="589.5" y="354" font-size="7.7" font-family='"Liberation Sans", sans-serif' fill="#23272e" fill-opacity="0.92" textLength="24.1" lengthAdjust="spacingAndGlyphs">670.00</text>
<text x="626.5" y="354" font-size="7.7" font-family='"Liberation Sans", sans-serif' fill="#23272e" fill-opacity="0.92" font-weight="bold" textLength="49.6" lengthAdjust="spacingAndGlyphs">Balance Due:</text>
<text x="678.7" y="354" font-size="7.7" font-family='"Liberation Sans", sans-serif' fill="#23272e" fill-opacity="0.92" textLength="14.7" lengthAdjust="spacingAndGlyphs">0.00</text>
<text x="322.6" y="367.9" font-size="8.7" font-family='"Liberation Sans", sans-serif' fill="#23272e" fill-opacity="0.92" textLength="18.7" lengthAdjust="spacingAndGlyphs">Type</text>
<text x="361.9" y="367.9" font-size="8.7" font-family='"Liberation Sans", sans-serif' fill="#23272e" fill-opacity="0.92" textLength="21.9" lengthAdjust="spacingAndGlyphs">Name</text>
<text x="483.9" y="367.9" font-size="8.7" font-family='"Liberation Sans", sans-serif' fill="#23272e" fill-opacity="0.92" textLength="19.1" lengthAdjust="spacingAndGlyphs">Price</text>
<text x="514.7" y="367.9" font-size="8.7" font-family='"Liberation Sans", sans-serif' fill="#23272e" fill-opacity="0.92" textLength="33.5" lengthAdjust="spacingAndGlyphs">Discount</text>
<text x="566.9" y="367.9" font-size="8.7" font-family='"Liberation Sans", sans-serif' fill="#23272e" fill-opacity="0.92" textLength="13.6" lengthAdjust="spacingAndGlyphs">Tax</text>
<text x="600.4" y="367.9" font-size="8.7" font-family='"Liberation Sans", sans-serif' fill="#23272e" fill-opacity="0.92" textLength="18.7" lengthAdjust="spacingAndGlyphs">Total</text>
<text x="636" y="367.9" font-size="8.7" font-family='"Liberation Sans", sans-serif' fill="#23272e" fill-opacity="0.92" textLength="21.9" lengthAdjust="spacingAndGlyphs">Owed</text>
<text x="679.8" y="367.9" font-size="8.7" font-family='"Liberation Sans", sans-serif' fill="#23272e" fill-opacity="0.92" textLength="16.9" lengthAdjust="spacingAndGlyphs">Paid</text>
<text x="322.6" y="382.5" font-size="6.45" font-family='"Liberation Sans", sans-serif' fill="#23272e" fill-opacity="0.92" textLength="24.7" lengthAdjust="spacingAndGlyphs">Package</text>
<text x="360.9" y="382.5" font-size="6.45" font-family='"Liberation Sans", sans-serif' fill="#23272e" fill-opacity="0.92" textLength="52.8" lengthAdjust="spacingAndGlyphs">Appraisal Sampler</text>
<text x="483.5" y="382.5" font-size="6.45" font-family='"Liberation Sans", sans-serif' fill="#23272e" fill-opacity="0.92" textLength="19.5" lengthAdjust="spacingAndGlyphs">595.00</text>
<text x="535.7" y="382.5" font-size="6.45" font-family='"Liberation Sans", sans-serif' fill="#23272e" fill-opacity="0.92" textLength="12.1" lengthAdjust="spacingAndGlyphs">0.00</text>
<text x="568" y="382.5" font-size="6.45" font-family='"Liberation Sans", sans-serif' fill="#23272e" fill-opacity="0.92" textLength="12.7" lengthAdjust="spacingAndGlyphs">0.00</text>
<text x="599.8" y="382.5" font-size="6.45" font-family='"Liberation Sans", sans-serif' fill="#23272e" fill-opacity="0.92" textLength="19.3" lengthAdjust="spacingAndGlyphs">595.00</text>
<text x="638.6" y="382.5" font-size="6.45" font-family='"Liberation Sans", sans-serif' fill="#23272e" fill-opacity="0.92" textLength="19.3" lengthAdjust="spacingAndGlyphs">595.00</text>
<text x="677.2" y="382.5" font-size="6.45" font-family='"Liberation Sans", sans-serif' fill="#23272e" fill-opacity="0.92" textLength="19.5" lengthAdjust="spacingAndGlyphs">595.00</text>
<text x="322.6" y="390.2" font-size="6.45" font-family='"Liberation Sans", sans-serif' fill="#23272e" fill-opacity="0.92" textLength="20.3" lengthAdjust="spacingAndGlyphs">Course</text>
<text x="360.9" y="390.2" font-size="6.45" font-family='"Liberation Sans", sans-serif' fill="#23272e" fill-opacity="0.92" textLength="55.2" lengthAdjust="spacingAndGlyphs">NEWREA-1070301</text>
<text x="490.5" y="390.2" font-size="6.45" font-family='"Liberation Sans", sans-serif' fill="#23272e" fill-opacity="0.92" textLength="12.5" lengthAdjust="spacingAndGlyphs">0.00</text>
<text x="535.7" y="390.2" font-size="6.45" font-family='"Liberation Sans", sans-serif' fill="#23272e" fill-opacity="0.92" textLength="12.1" lengthAdjust="spacingAndGlyphs">0.00</text>
<text x="568" y="390.2" font-size="6.45" font-family='"Liberation Sans", sans-serif' fill="#23272e" fill-opacity="0.92" textLength="12.7" lengthAdjust="spacingAndGlyphs">0.00</text>
<text x="606.6" y="390.2" font-size="6.45" font-family='"Liberation Sans", sans-serif' fill="#23272e" fill-opacity="0.92" textLength="12.5" lengthAdjust="spacingAndGlyphs">0.00</text>
<text x="645.4" y="390.2" font-size="6.45" font-family='"Liberation Sans", sans-serif' fill="#23272e" fill-opacity="0.92" textLength="12.5" lengthAdjust="spacingAndGlyphs">0.00</text>
<text x="684.2" y="390.2" font-size="6.45" font-family='"Liberation Sans", sans-serif' fill="#23272e" fill-opacity="0.92" textLength="12.5" lengthAdjust="spacingAndGlyphs">0.00</text>
<text x="322.6" y="397.8" font-size="6.45" font-family='"Liberation Sans", sans-serif' fill="#23272e" fill-opacity="0.92" textLength="20.3" lengthAdjust="spacingAndGlyphs">Course</text>
<text x="360.9" y="397.8" font-size="6.45" font-family='"Liberation Sans", sans-serif' fill="#23272e" fill-opacity="0.92" textLength="33.5" lengthAdjust="spacingAndGlyphs">HOIN-DL01</text>
<text x="486.9" y="397.8" font-size="6.45" font-family='"Liberation Sans", sans-serif' fill="#23272e" fill-opacity="0.92" textLength="16.1" lengthAdjust="spacingAndGlyphs">75.00</text>
<text x="535.7" y="397.8" font-size="6.45" font-family='"Liberation Sans", sans-serif' fill="#23272e" fill-opacity="0.92" textLength="12.1" lengthAdjust="spacingAndGlyphs">0.00</text>
<text x="568" y="397.8" font-size="6.45" font-family='"Liberation Sans", sans-serif' fill="#23272e" fill-opacity="0.92" textLength="12.7" lengthAdjust="spacingAndGlyphs">0.00</text>
<text x="603" y="397.8" font-size="6.45" font-family='"Liberation Sans", sans-serif' fill="#23272e" fill-opacity="0.92" textLength="16.1" lengthAdjust="spacingAndGlyphs">75.00</text>
<text x="641.8" y="397.8" font-size="6.45" font-family='"Liberation Sans", sans-serif' fill="#23272e" fill-opacity="0.92" textLength="16.1" lengthAdjust="spacingAndGlyphs">75.00</text>
<text x="680.6" y="397.8" font-size="6.45" font-family='"Liberation Sans", sans-serif' fill="#23272e" fill-opacity="0.92" textLength="16.1" lengthAdjust="spacingAndGlyphs">75.00</text>
</svg>
<!--RECEIPT_END-->

<!-- pager -->
<div id="pager" style="left:383px;top:549px;width:286px;height:38px;background:#fff;border-radius:6px"></div>
<svg id="pg-prev" style="left:408px;top:563px" width="6" height="10" viewBox="0 0 6 10"><path d="M5.2 0.8 L1 5 L5.2 9.2" fill="none" stroke="#adb1b9" stroke-width="1.3" stroke-linecap="round" stroke-linejoin="round"/></svg>
<div id="pg-box" style="left:431px;top:556px;width:64px;height:24px;background:#fff;border:1px solid #dcdee3;border-radius:4px"></div>
<div class="t" id="pg-n" style="left:459px;top:561.5px;font-size:14px;color:#1d2536">1</div>
<div class="t" id="pg-slash" style="left:504px;top:561.5px;font-size:14px;color:#3a4150">/</div>
<div class="t" id="pg-tot" style="left:515.6px;top:561.5px;font-size:14px;color:#3a4150">1</div>
<svg id="pg-next" style="left:540px;top:563px" width="6" height="10" viewBox="0 0 6 10"><path d="M0.8 0.8 L5 5 L0.8 9.2" fill="none" stroke="#adb1b9" stroke-width="1.3" stroke-linecap="round" stroke-linejoin="round"/></svg>
<div class="sep" style="left:570px;top:560px;height:16px;background:#e9eaed"></div>
<div id="pg-sel" style="left:583px;top:554px;width:68px;height:28px;background:#fff;border:1px solid #dcdee3;border-radius:4px"></div>
<div class="t" id="pg-zoom" style="left:594px;top:561.5px;font-size:14px;transform:scaleX(0.88);transform-origin:0 0;color:#1d2536">36%</div>
<svg id="pg-chev" style="left:633px;top:565px" width="10" height="6" viewBox="0 0 10 6"><path d="M0.8 0.8 L5 5 L9.2 0.8" fill="none" stroke="#2b3242" stroke-width="1.5" stroke-linecap="round" stroke-linejoin="round"/></svg>

<div id="frame"></div>
</body></html>
